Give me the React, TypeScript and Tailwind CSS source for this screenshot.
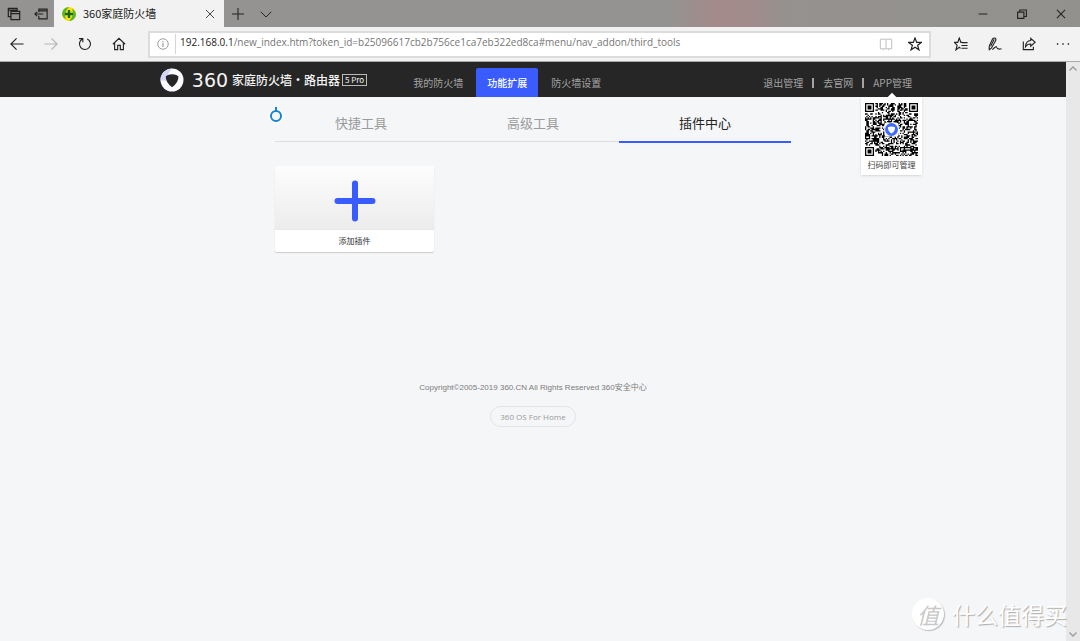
import { useState } from 'react';
import type { ReactNode } from 'react';

const QR_SIZE = 41;

// is this cell part of one of the three corner squares, and if so is it dark
function finder(x: number, y: number): boolean | null {
  const corners = [[0, 0], [QR_SIZE - 7, 0], [0, QR_SIZE - 7]];
  for (const [cx, cy] of corners) {
    const dx = x - cx;
    const dy = y - cy;
    if (dx >= -1 && dx <= 7 && dy >= -1 && dy <= 7) {
      const ring = Math.max(Math.abs(dx - 3), Math.abs(dy - 3));
      return ring === 3 || ring <= 1;
    }
  }
  return null;
}

function qrPath() {
  let seed = 360;
  let d = '';
  for (let y = 0; y < QR_SIZE; y++) {
    for (let x = 0; x < QR_SIZE; x++) {
      seed = (seed * 1103515245 + 12345) % 2147483648;
      const corner = finder(x, y);
      const dark = corner === null ? seed / 2147483648 > 0.46 : corner;
      if (dark) d += `M${x} ${y}h1v1h-1z`;
    }
  }
  return d;
}

const QR_PATH = qrPath();

function QrCode() {
  return (
    <svg className="size-[53px]" viewBox="0 0 41 41" role="img" aria-label="二维码">
      <path d={QR_PATH} fill="#000" />
      <rect x="15" y="15" width="11" height="11" rx="2" fill="#fff" />
      <circle cx="20.5" cy="20.5" r="5" fill="#3f6bff" />
      <path d="M17.8 18.8q2.7-1.3 5.4 0q.3 3-2.7 4.8q-3-1.8-2.7-4.8z" fill="#fff" />
    </svg>
  );
}

function Icon({ size = 'size-4', children }: { size?: string; children: ReactNode }) {
  return (
    <svg className={size} viewBox="0 0 16 16" fill="none" stroke="currentColor" strokeWidth="1.1">
      {children}
    </svg>
  );
}

function BarButton({ label, className, children }: { label: string; className: string; children: ReactNode }) {
  return (
    <button aria-label={label} className={`flex h-full shrink-0 items-center justify-center ${className}`}>
      {children}
    </button>
  );
}

function TitleBar() {
  return (
    <div className="flex h-[27px] bg-[#959392] bg-[linear-gradient(90deg,#959392_0%,#959392_62%,#a38b8b_66%,#a38b8b_69%,#95928f_73%,#92918e_100%)] text-[#222]">
      <BarButton label="标签页" className="w-[27px]">
        <Icon size="size-[14px]">
          <path d="M4.500 11H1.500V1.500h10v3M1.500 3.500h10M4.500 5h10v9.500h-10zM4.500 7.500h10" strokeWidth="1.4" />
        </Icon>
      </BarButton>
      <BarButton label="搁置标签页" className="w-[27px]">
        <Icon size="size-[14px]">
          <path d="M5.500 6V2.500H15v11H5.500V10M5.500 4.500H15M10.500 8H1M3.500 5.500 1 8l2.500 2.500" strokeWidth="1.3" />
        </Icon>
      </BarButton>
      <div className="flex w-[170px] items-center bg-[#f2f2f2] pl-2">
        <svg className="size-[14px] shrink-0" viewBox="0 0 14 14">
          <circle cx="7" cy="7" r="7" fill="#f8df12" />
          <path d="M7 0a7 7 0 0 0-7 7q1 4 4 5Q1 6 7 0zM7 14a7 7 0 0 0 7-7q-1-4-4-5Q13 8 7 14z" fill="#58b52b" />
          <path d="M7 3v8M3 7h8" stroke="#126b1c" strokeWidth="2.4" />
        </svg>
        <span className="ml-[7px] flex-1 text-[11px]">360家庭防火墙</span>
        <BarButton label="关闭标签页" className="w-[28px]">
          <Icon size="size-3">
            <path d="M2.500 2.500l11 11M13.500 2.500l-11 11" />
          </Icon>
        </BarButton>
      </div>
      <BarButton label="新建标签页" className="w-[28px]">
        <Icon size="size-3">
          <path d="M8 0v16M0 8h16" strokeWidth="1.4" />
        </Icon>
      </BarButton>
      <BarButton label="预览" className="w-[27px]">
        <Icon size="size-3">
          <path d="M1 5l7 7 7-7" strokeWidth="1.3" />
        </Icon>
      </BarButton>
      <div className="flex-1" />
      <BarButton label="最小化" className="w-[39px]">
        <Icon size="size-[10px]">
          <path d="M1 8h14" strokeWidth="1.6" />
        </Icon>
      </BarButton>
      <BarButton label="还原" className="w-[39px]">
        <Icon size="size-[10px]">
          <path d="M1 5h10v10H1zM4.500 5V1.500H15V12h-4" strokeWidth="1.8" />
        </Icon>
      </BarButton>
      <BarButton label="关闭" className="w-[39px]">
        <Icon size="size-[10px]">
          <path d="M1.500 1.500l13 13M14.500 1.500l-13 13" strokeWidth="1.7" />
        </Icon>
      </BarButton>
    </div>
  );
}

function AddressBar() {
  return (
    <div className="flex h-[35px] items-center border-b border-[#a9a9a9] bg-[#f2f2f2] text-[#222]">
      <BarButton label="后退" className="w-[34px]">
        <Icon size="size-[14px]">
          <path d="M15.500 8H1M7.500 1.500 1 8l6.500 6.500" strokeWidth="1.3" />
        </Icon>
      </BarButton>
      <BarButton label="前进" className="w-[34px] text-[#b3b3b3]">
        <Icon size="size-[14px]">
          <path d="M.500 8H15M8.500 1.500 15 8l-6.500 6.500" strokeWidth="1.3" />
        </Icon>
      </BarButton>
      <BarButton label="刷新" className="w-[34px]">
        <Icon size="size-[14px]">
          <path d="M10.500 2.200a6.300 6.300 0 1 1-5.500.2M1.200 1.800h4.300v4.300" strokeWidth="1.3" />
        </Icon>
      </BarButton>
      <BarButton label="主页" className="w-[34px]">
        <Icon size="size-[14px]">
          <path d="M1 8.300 8 1.500l7 6.800M3 7v7.500h3.500v-5h3v5H13V7" strokeWidth="1.3" />
        </Icon>
      </BarButton>
      <div className="ml-[12px] flex h-[27px] flex-1 items-center border-2 border-[#dcdcdc] bg-white">
        <span className="flex w-[25px] justify-center text-[#8a8a8a]">
          <Icon size="size-3">
            <circle cx="8" cy="8" r="7" />
            <path d="M8 7v5M8 4v1.500" strokeWidth="1.4" />
          </Icon>
        </span>
        <span className="h-5 w-px bg-[#d5d5d5]" />
        <a
          href="#menu/nav_addon/third_tools"
          className="ml-1 flex-1 pb-1 font-['Open_Sans','Noto_Sans_CJK_SC',sans-serif] text-[10px] leading-4 text-[#767676]"
        >
          <span className="text-[#1b1b1b]">192.168.0.1</span>
          /new_index.htm?token_id=b25096617cb2b756ce1ca7eb322ed8ca#menu/nav_addon/third_tools
        </a>
        <BarButton label="阅读视图" className="w-[28px] text-[#bdbdbd]">
          <Icon size="size-[14px]">
            <path d="M8 3v10.500M1.500 2.500H8h6.500v11h-13zM5 13.500V15M11 13.500V15" />
          </Icon>
        </BarButton>
        <BarButton label="收藏" className="w-[29px]">
          <Icon size="size-[14px]">
            <path d="M8 1.200l1.900 5h5.300l-4.200 3.300 1.500 5.200L8 11.600l-4.500 3.100L5 9.500.8 6.200h5.300z" strokeWidth="1.4" />
          </Icon>
        </BarButton>
      </div>
      <BarButton label="收藏夹" className="ml-[13px] w-[34px]">
        <Icon size="size-[14px]">
          <path d="M9.500 6.200H7.900L6 1.200l-1.700 5H.5L3.600 9.500l-1.400 5.200L6 11.800l1.500 1.200M9 6.500h6.500M8.500 9.700h7M8.500 12.900h7" strokeWidth="1.3" />
        </Icon>
      </BarButton>
      <BarButton label="添加笔记" className="w-[34px]">
        <Icon size="size-[14px]">
          <path d="M1.500 14.500q-.5-3 .5-5.500L5 2.500Q6.500.500 8.500 1.500q1 1.500 0 3L4 12.500zM7 2.500 3 10.500M5 14.500q4.500-5 5-2.500t5.500 1.500" strokeWidth="1.3" />
        </Icon>
      </BarButton>
      <BarButton label="共享" className="w-[34px]">
        <Icon size="size-[14px]">
          <path d="M1.500 5v9.500H13V11M10 1.500 15 6l-5 4.500V8Q6 7.800 4 11q.3-6.500 6-7z" strokeWidth="1.3" />
        </Icon>
      </BarButton>
      <BarButton label="设置及更多" className="w-[34px]">
        <Icon size="size-[14px]">
          <path d="M1 8h1.600M7.200 8h1.600M13.400 8H15" strokeWidth="1.600" />
        </Icon>
      </BarButton>
    </div>
  );
}

function Logo() {
  return (
    <a href="#home" className="flex items-center text-[#f3f3f3]">
      <svg className="size-6" viewBox="0 0 24 24">
        <circle cx="12" cy="12" r="11.500" fill="#fafaff" />
        <path d="M3 5q3-4 9-4.500L8 6 6 13Q3 12 .5 13 0 9 3 5z" fill="#d3d6f6" />
        <path d="M5.800 8.300q1-.5 2-1.200 4.200-1.800 8.600 0 1 .8 2 1.200.4 6-6.300 11-6.700-5-6.300-11z" fill="#262626" />
      </svg>
      <span className="ml-[5px] w-[42px] text-center font-['DejaVu_Sans','Noto_Sans_CJK_SC',sans-serif] text-[19px] leading-6">
        360
      </span>
      <span className="ml-px text-[12px] leading-6 font-medium">家庭防火墙·路由器</span>
      <span className="ml-[2px] border border-[#b9b9b9] px-[2px] text-[8px] leading-[10px]">5 Pro</span>
    </a>
  );
}

const menu = ['我的防火墙', '功能扩展', '防火墙设置'];
const tabs = ['快捷工具', '高级工具', '插件中心'];

function Header() {
  const [current, setCurrent] = useState('功能扩展');
  return (
    <header className="h-[35px] bg-[#262626] text-[10px] text-[#a3a3a3]">
      <div className="mx-auto flex h-full max-w-[760px] items-center pr-px pl-[7px]">
        <Logo />
        <nav className="ml-[35px] flex h-full gap-[2px] pt-[6px]">
          {menu.map((item) => (
            <button
              key={item}
              onClick={() => setCurrent(item)}
              className={`rounded-t-xs px-[11px] whitespace-nowrap ${item === current ? 'bg-[#3a5cff] font-medium text-white' : ''}`}
            >
              {item}
            </button>
          ))}
        </nav>
        <div className="ml-auto flex h-full items-center gap-[9px] pt-[6px] whitespace-nowrap">
          <button>退出管理</button>
          <span className="h-[10px] w-[2px] bg-[#a3a3a3]" />
          <a href="#official">去官网</a>
          <span className="h-[10px] w-[2px] bg-[#a3a3a3]" />
          <div className="relative flex h-full items-center">
            <a href="#app">APP管理</a>
            {/* popup that hangs below the link */}
            <div className="absolute top-full -right-[10px] z-10 flex w-[61px] flex-col items-center bg-white pt-[6px] pb-1 shadow-sm">
              <span className="absolute -top-[3px] size-[6px] rotate-45 bg-white" />
              <QrCode />
              <span className="mt-[3px] text-[8px] leading-3 text-[#444]">扫码即可管理</span>
            </div>
          </div>
        </div>
      </div>
    </header>
  );
}

function AddonPage() {
  const [tab, setTab] = useState('插件中心');
  return (
    <main className="relative mx-auto w-full max-w-[516px]">
      {/* busy pointer */}
      <svg className="absolute top-[9px] -left-[7px] h-[18px] w-4" viewBox="0 0 16 18" fill="none">
        <circle cx="8" cy="10" r="5.500" stroke="#fff" strokeWidth="4" />
        <circle cx="8" cy="10" r="5" stroke="#1583d8" strokeWidth="2" />
        <path d="M8 1v4" stroke="#1583d8" strokeWidth="2" />
      </svg>
      <div role="tablist" className="grid grid-cols-3">
        {tabs.map((name) => (
          <button
            key={name}
            role="tab"
            aria-selected={name === tab}
            onClick={() => setTab(name)}
            className={`pt-2 text-[13px] ${
              name === tab ? 'h-[46px] border-b-2 border-[#3a5cff] text-[#222]' : 'h-[45px] border-b border-[#dedede] text-[#9b9b9b]'
            }`}
          >
            {name}
          </button>
        ))}
      </div>
      <button className="mt-[23px] flex w-[159px] flex-col overflow-hidden rounded-xs bg-white shadow-[0_1px_1px_#ccc]">
        <span className="flex h-16 w-full items-center justify-center border-b border-[#e8e8e8] bg-linear-to-b from-[#fdfdfd] to-[#ececec] pt-[6px]">
          <svg className="size-[42px]" viewBox="0 0 42 42" stroke="#3a5cff" strokeWidth="6" strokeLinecap="round">
            <path d="M21 3.500v35M3.500 21h35" />
          </svg>
        </span>
        <span className="w-full text-center text-[8px] leading-[22px] text-[#333]">添加插件</span>
      </button>
    </main>
  );
}

function Footer() {
  return (
    <footer className="mt-[130px] flex flex-col items-center text-[8px] text-[#7b7b7b]">
      <p className="font-['Liberation_Sans','Noto_Sans_CJK_SC',sans-serif] leading-3">
        Copyright©2005-2019 360.CN All Rights Reserved 360安全中心
      </p>
      <button className="mt-3 h-[21px] rounded-full border border-[#e2e3e6] px-[9px] font-['Open_Sans','Noto_Sans_CJK_SC',sans-serif] text-[#999]">
        360 OS For Home
      </button>
    </footer>
  );
}

function Watermark() {
  return (
    <div className="absolute right-[13px] bottom-[9px] flex items-center gap-2 text-white [text-shadow:1px_1px_1px_#aaa]">
      <span className="flex size-8 items-center justify-center rounded-full bg-white text-[22px] leading-8 text-[#c8c8c8] shadow-[1px_1px_1px_#bbb] [text-shadow:none]">
        <i>值</i>
      </span>
      <span className="text-[23px] leading-9">什么值得买</span>
    </div>
  );
}

export default function App() {
  return (
    <div className="relative flex min-h-screen flex-col bg-[#f5f6f8] font-['Noto_Sans_CJK_SC',sans-serif]" lang="zh-CN">
      <TitleBar />
      <AddressBar />
      <div className="flex flex-1">
        <div className="min-w-0 flex-1">
          <Header />
          <AddonPage />
          <Footer />
        </div>
        <div className="flex w-[14px] flex-col items-center justify-between bg-[#e8e8e8] py-[3px] text-[#999]">
          <Icon size="size-2">
            <path d="M1 11l7-7 7 7" strokeWidth="2.500" />
          </Icon>
          <Icon size="size-2">
            <path d="M1 5l7 7 7-7" strokeWidth="2.500" />
          </Icon>
        </div>
      </div>
      <Watermark />
    </div>
  );
}
